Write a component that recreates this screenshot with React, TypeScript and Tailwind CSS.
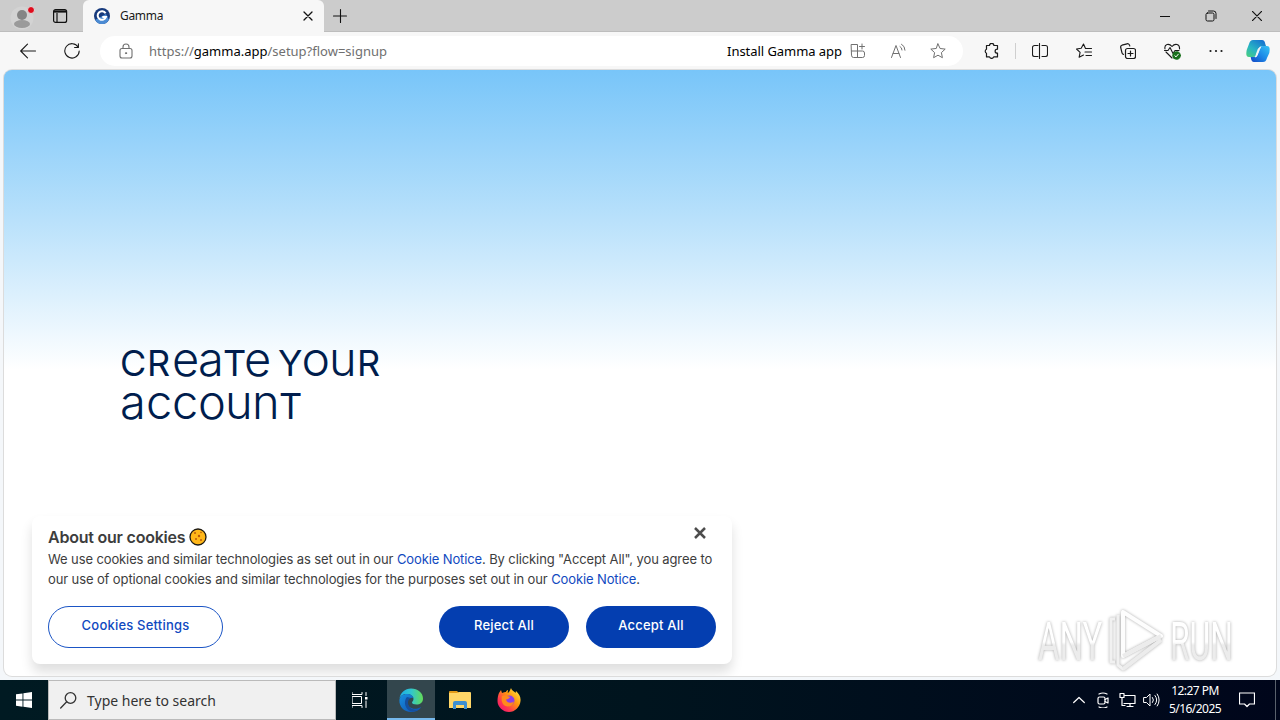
import type { ReactNode } from "react";

type IconProps = { className?: string; children: ReactNode; box?: string };

function Icon({ className = "size-4", children, box = "0 0 16 16" }: IconProps) {
  return (
    <svg
      className={`shrink-0 ${className}`}
      viewBox={box}
      fill="none"
      stroke="currentColor"
      strokeWidth={1}
      strokeLinecap="round"
      strokeLinejoin="round"
    >
      {children}
    </svg>
  );
}

const star = "M8 .9 10.1 5.5 15.2 6.1 11.4 9.6 12.4 14.7 8 12.2 3.6 14.7 4.6 9.6 .8 6.1 5.9 5.5Z";

function TabStrip() {
  return (
    <div className="flex h-8 items-end bg-[#cccccc]">
      <div className="flex h-8 w-[83px] items-center border-b border-[#bdbdbd]">
        <svg className="ml-2.5 h-7 w-7 shrink-0" viewBox="0 0 28 28">
          <circle cx="12" cy="16" r="11.5" fill="#d3d3d3" />
          <circle cx="12" cy="13" r="5" fill="#858585" />
          <ellipse cx="12" cy="22" rx="8" ry="4" fill="#9a9a9a" />
          <circle cx="21" cy="8" r="3.5" fill="#e00b1c" stroke="#dedede" />
        </svg>
        <svg className="ml-3.5 h-4 w-4 shrink-0" viewBox="0 0 16 16" fill="none" stroke="#111">
          <rect x="1.6" y="1.6" width="13" height="12.8" rx="2" strokeWidth="1.2" />
          <path d="M2 3.5h12" strokeWidth="2.2" />
          <path d="M5 5v9" strokeWidth="1.2" />
        </svg>
      </div>
      <div className="flex h-8 w-[241px] items-center rounded-t-md bg-[#f7f7f7] pl-[11px] pr-[11px]">
        <svg className="h-4 w-4 shrink-0" viewBox="0 0 16 16">
          <circle cx="8" cy="8" r="8" fill="#173a7d" />
          <path d="M1 12a8 8 0 0 0 14 0L12 6Z" fill="#4b8bd3" />
          <path d="M11.6 5.2A4.3 4.3 0 1 0 12 9H8.3" fill="none" stroke="white" strokeWidth="2" />
        </svg>
        <span className="ml-2.5 font-['Noto_Sans'] text-[12px] tracking-[-0.3px] text-[#1a1a1a]">Gamma</span>
        <Icon className="ml-auto h-2.5 w-2.5 text-[#111]" box="0 0 10 10">
          <path d="m1 1 8 8M9 1 1 9" strokeWidth="1.3" />
        </Icon>
      </div>
      <div className="flex h-8 flex-1 items-center border-b border-[#bdbdbd] pl-2 text-[#111]">
        <Icon box="0 0 16 16" className="size-4">
          <path d="M8.500 1.500v13M1.500 8h13" strokeWidth="1.1" />
        </Icon>
        <div className="ml-auto flex items-center gap-9 pr-[18px]">
          <Icon className="h-2.5 w-2.5" box="0 0 10 10"><path d="M0 5.5h10" /></Icon>
          <Icon className="h-2.5 w-2.5 overflow-visible" box="0 0 10 10">
            <rect x="0" y="2" width="8" height="8" rx="1.5" />
            <path d="M2.500 0h5A2.500 2.500 0 0 1 10 2.500v5" />
          </Icon>
          <Icon className="h-2.5 w-2.5" box="0 0 10 10"><path d="m.3.3 9.4 9.4M9.7.3.3 9.7" strokeWidth="1.2" /></Icon>
        </div>
      </div>
    </div>
  );
}

function Toolbar() {
  return (
    <div className="flex h-[38px] items-center bg-[#f7f7f7] pl-5 pr-[10px] font-['Noto_Sans'] text-[#1a1a1a]">
      <Icon><path d="M15.5 8H.7M7.5 1.2.7 8l6.8 6.8" strokeWidth="1.1" /></Icon>
      <Icon className="ml-7 size-4">
        <path d="M14.2 4.2A7.2 7.2 0 1 0 15.2 8M14.4.8v3.7h-3.8" strokeWidth="1.1" />
      </Icon>
      <div className="ml-5 flex h-[30px] w-[863px] items-center rounded-full bg-white pl-[18px] pr-[17px] text-[#707070]">
        <Icon>
          <rect x="2" y="5.5" width="12" height="9.5" rx="2" strokeWidth="1.1" />
          <path d="M5 5.5V4a3 3 0 0 1 6 0v1.5" strokeWidth="1.1" />
          <circle cx="8" cy="10.2" r=".6" fill="currentColor" />
        </Icon>
        <span className="ml-[15px] whitespace-nowrap pt-px text-[13px]">
          https://<span className="text-black">gamma.app</span>/setup?flow=signup
        </span>
        <span className="ml-auto whitespace-nowrap pt-px text-[13px] tracking-[-0.05px] text-black">Install Gamma app</span>
        <Icon className="ml-2 size-4">
          <path d="M1.5 1.5h6v13h-4a2 2 0 0 1-2-2ZM1.5 8h11a2 2 0 0 1 2 2v2.500a2 2 0 0 1-2 2h-5M12 1v5M9.500 3.500h5" />
        </Icon>
        <Icon className="ml-6 size-4">
          <path d="M1.500 14.500 6 2.500 10.500 14.500M3.100 10.500h5.800M10 3.500q2 1 2 3.500M11.500 1.200q3.500 1.800 3.500 6" />
        </Icon>
        <Icon className="ml-6 size-4"><path d={star} /></Icon>
      </div>
      <Icon className="ml-5 size-4">
        <path d="M3.500 2.500h3a2.200 2.200 0 0 1 4.400 0h3.600v3.700c-3.200 0-3.200 4 0 4v3.700h-3.800a2.200 2.200 0 0 1-4.200 0h-3v-3.600a2.200 2.200 0 0 1 0-4Z" strokeWidth="1.200" />
      </Icon>
      <div className="ml-4 h-4 w-px bg-[#cfcfcf]" />
      <Icon className="ml-4 size-4">
        <path d="M6 2.500H2.500a2 2 0 0 0-2 2v7a2 2 0 0 0 2 2H6M7.500 .5v15M10 2.500h3.500a2 2 0 0 1 2 2v7a2 2 0 0 1-2 2H10" strokeWidth="1.100" />
      </Icon>
      <Icon className="ml-7 size-4">
        <path d="M9.500 5.500 7.500 1 5.200 5.300.5 6l3.600 3.300-1 5L7.500 12M9.500 5.500h6M9 9h6.500M10 12.500h5.500" strokeWidth="1.100" />
      </Icon>
      <Icon className="ml-7 size-4">
        <rect x="5.500" y="5.500" width="10" height="10" rx="2" strokeWidth="1.200" />
        <path d="M10.500 8v5M8 10.500h5M3.500 11.300A2 2 0 0 1 2 9.800L.7 4.500A2 2 0 0 1 2 2.200L7 .8a2 2 0 0 1 2.500 1.400L9.800 3" strokeWidth="1.200" />
      </Icon>
      <Icon className="ml-7 h-[17px] w-[17px]" box="0 0 17 17">
        <path d="M1 6C0 1 5 0 8 3.500 11 0 16 1 15.500 6M2 9l6 6M.5 7.500H4l2-3 3 6 2-3h4" strokeWidth="1.100" />
        <circle cx="12.500" cy="12.500" r="3.800" fill="#18701b" stroke="#18701b" />
        <path d="m10.800 12.700 1.200 1.200 2.300-2.700" stroke="white" />
      </Icon>
      <Icon className="ml-[27px] size-4">
        <g fill="currentColor" stroke="none"><circle cx="2.500" cy="8" r="1.100" /><circle cx="8" cy="8" r="1.100" /><circle cx="13.500" cy="8" r="1.100" /></g>
      </Icon>
      <svg className="ml-auto h-6 w-6 shrink-0" viewBox="0 0 24 24">
        <defs>
          <linearGradient id="copilotA" x1="0" y1="1" x2=".8" y2="0"><stop stopColor="#4bd07a" /><stop offset=".45" stopColor="#28b5c4" /><stop offset="1" stopColor="#1672d0" /></linearGradient>
          <linearGradient id="copilotB" x1="1" y1="0" x2="0" y2="1"><stop stopColor="#36c4f4" /><stop offset=".5" stopColor="#1d8be8" /><stop offset="1" stopColor="#1346c4" /></linearGradient>
        </defs>
        <path d="M7 1h9c2 0 2.800 1.500 3.300 4L20 7h-4c-2 0-2.500 1-3 3l-2 5c-.8 2-1.500 3-4 3H3c-3 0-3-3-2.300-7L3 5c1-3 2-4 4-4Z" fill="url(#copilotA)" />
        <path d="M17 23H8c-2 0-2.800-1.500-3.300-5H8c2 0 2.500-1 3-3l2-5c.8-2 1.500-3 4-3h4c3 0 3 3 2.300 7L21 19c-1 3-2 4-4 4Z" fill="url(#copilotB)" />
        <path d="M14.800 8.500c-.8.300-1 1-1.300 1.800L11 16.500c-.3.800-.7 1.300-1.500 1.500l2.200-6.500c.6-2 1.500-3 3.100-3Z" fill="#f7f7f7" stroke="#f7f7f7" />
      </svg>
    </div>
  );
}

// Unicase headline: small letters are enlarged to sit at cap height
const cap = "inline-block text-[36px] font-[380]";
const low = "inline-block text-[47px] font-[300]";

function Headline() {
  return (
    <h1 className="flex flex-col pl-[116px] pt-[267px] font-['Inter'] text-[#001d4d]">
      <div className="flex h-[43px] items-baseline leading-[43px]">
        <span className={`${cap} w-[27px]`}>C</span>
        <span className={`${cap} w-[25px]`}>R</span>
        <span className={`${low} w-[26px]`}>e</span>
        <span className={`${low} w-[25px]`}>a</span>
        <span className={`${cap} w-[21px]`}>T</span>
        <span className={`${low} w-[34px]`}>e</span>
        <span className={`${cap} w-[24px]`}>Y</span>
        <span className={`${cap} w-[27px]`}>O</span>
        <span className={`${low} w-[28px]`}>u</span>
        <span className={`${cap} w-[24px]`}>R</span>
      </div>
      <div className="flex h-[43px] items-baseline leading-[43px]">
        <span className={`${low} w-[26px]`}>a</span>
        <span className={`${low} w-[26px]`}>c</span>
        <span className={`${low} w-[26px]`}>c</span>
        <span className={`${low} w-[27px]`}>o</span>
        <span className={`${low} w-[27px]`}>u</span>
        <span className={`${low} w-[27px]`}>n</span>
        <span className={`${cap} w-[24px]`}>T</span>
      </div>
    </h1>
  );
}

function CookieBanner() {
  return (
    <div className="absolute left-7 top-[446px] h-[148px] w-[700px] rounded-lg bg-white px-4 pt-[10px] font-['Inter'] text-[#3d3d3d] shadow-[0_8px_12px_rgba(0,0,0,0.13)]">
      <div className="flex h-[23px] items-center pb-px">
        <h2 className="whitespace-nowrap text-[16px] font-semibold tracking-[-0.22px]">About our cookies</h2>
        <svg className="ml-1 h-[18px] w-[18px]" viewBox="0 0 18 18">
          <circle cx="9" cy="9" r="8" fill="#ffb719" stroke="#1d1a13" strokeWidth="1.300" />
          <g fill="#b95a0c"><circle cx="6" cy="5" r="1" /><circle cx="10" cy="8" r="1.200" /><circle cx="7" cy="11" r="1" /><circle cx="12" cy="12" r="1" /><circle cx="12" cy="4.500" r=".8" /></g>
        </svg>
        <Icon className="mb-2 ml-auto mr-2.5 h-3 w-3 text-[#4d4d4d]" box="0 0 12 12">
          <path d="m1 1 10 10M11 1 1 11" strokeWidth="2.500" strokeLinecap="butt" />
        </Icon>
      </div>
      <p className="whitespace-nowrap text-[13px] leading-5">
        <span className="block tracking-[-0.11px]">We use cookies and similar technologies as set out in our <a className="text-[#1049c0]">Cookie Notice</a>. By clicking "Accept All", you agree to</span>
        <span className="block tracking-[-0.11px]">our use of optional cookies and similar technologies for the purposes set out in our <a className="text-[#1049c0]">Cookie Notice</a>.</span>
      </p>
      <div className="mt-[17px] flex text-[13px] font-medium tracking-[0.2px]">
        <button className="h-[42px] w-[175px] rounded-full border border-[#1b55c5] pb-0.5 text-[#1049c0]">Cookies Settings</button>
        <button className="ml-auto h-[42px] w-[130px] rounded-full bg-[#043eb0] pb-0.5 text-white">Reject All</button>
        <button className="ml-[17px] h-[42px] w-[130px] rounded-full bg-[#043eb0] pb-0.5 text-white">Accept All</button>
      </div>
    </div>
  );
}

function Watermark() {
  return (
    <div className="absolute left-[1034px] top-[537px] flex h-[66px] w-[196px] items-center font-['Roboto'] text-[53px] leading-none drop-shadow-[0_0_1.5px_#aaa]">
      <span className="w-[68px] origin-left scale-x-[0.62] pt-1 text-transparent">
        <span className="bg-[linear-gradient(#fff_50%,#ececec_55%)] bg-clip-text">ANY</span>
      </span>
      <svg className="h-[66px] w-[62px] shrink-0" viewBox="0 0 62 66" fill="none" strokeWidth="4" strokeLinejoin="round">
        <path d="M9 12H5v43h4M12 8v50l5 4 38-29" stroke="#f1f1f1" strokeWidth="3" />
        <path d="M17 5v44l38-20Z" stroke="#fdfdfd" />
        <path d="M17 49l38-20M17 62l38-29" stroke="#ececec" />
      </svg>
      <span className="ml-0.5 w-[66px] origin-left scale-x-[0.6] pt-1 text-transparent">
        <span className="bg-[linear-gradient(#fff_50%,#ececec_55%)] bg-clip-text">RUN</span>
      </span>
    </div>
  );
}

function Taskbar() {
  return (
    <div className="flex h-10 items-center bg-linear-to-r from-[#001a22] via-[#00141e] to-[#00061b] font-['Noto_Sans'] text-white">
      <div className="flex w-12 justify-center">
        <svg className="h-4 w-4" viewBox="0 0 16 16" fill="white">
          <path d="M0 2.300 6.500 1.400v6.200H0ZM7.400 1.200 16 0v7.600H7.400ZM0 8.500h6.500v6.200L0 13.800ZM7.400 8.500H16V16l-8.600-1.200Z" />
        </svg>
      </div>
      <div className="flex h-10 w-72 items-center border border-[#bababa] bg-[#f0f0f0] pl-[11px] text-[#333]">
        <Icon className="h-[17px] w-[17px]" box="0 0 17 17">
          <circle cx="10.500" cy="6" r="5.300" strokeWidth="1.300" />
          <path d="m6.700 9.800-6 6.200" strokeWidth="1.300" />
        </Icon>
        <span className="ml-2.5 text-[14px]">Type here to search</span>
      </div>
      <div className="flex w-[51px] justify-center pr-[3px]">
        <Icon className="h-4 w-4">
          <path d="M0 .5v2h10v-2M0 15.500v-2h10v2M.5 4.500h9v7h-9ZM14 .5v3M14 9v6.500" />
          <rect x="13" y="5" width="2.500" height="2.500" fill="white" stroke="none" />
        </Icon>
      </div>
      <div className="flex h-10 w-12 items-center justify-center border-b-2 border-[#76b9ed] bg-[#33464d]">
        <svg className="mt-px h-6 w-6" viewBox="0 0 24 24">
          <defs>
            <linearGradient id="edgeTop" x1="0" x2="1"><stop stopColor="#1bace9" /><stop offset=".5" stopColor="#31c6ce" /><stop offset="1" stopColor="#64dc57" /></linearGradient>
            <linearGradient id="edgeLow" x1="0" x2="1" y2="1"><stop stopColor="#178fe0" /><stop offset="1" stopColor="#104eae" /></linearGradient>
          </defs>
          <path d="M.5 11C1 5 6 .5 12 .5c7 0 12 4.500 12 10 0 4-3 6-6.500 6-3 0-4.500-1-4.500-2s1.500-1.500 1.500-3.500c0-3-3-5-6.500-5-4 0-7 2-7.500 5Z" fill="url(#edgeTop)" />
          <path d="M.4 12C1 8 4 6 8 6c3 0 6 1.500 6.500 4-3-1-6 1-6 4.500 0 5 5 7 10 6 2-.4 3-1.500 3.500-1-2 3-6 4.500-10 4.500C5 24 0 18.500.4 12Z" fill="url(#edgeLow)" />
          <path d="M8 9C5 12 5 19 10 22.500c2 1.500 6 1 9-.5-5 .5-10-2.500-10-7.500 0-2 1-3.500 3-4.500" fill="#154f9e" />
        </svg>
      </div>
      <svg className="ml-3.5 h-[22px] w-[22px]" viewBox="0 0 22 22">
        <path d="M0 3q0-1 1-1h7l2 2H0Z" fill="#e39b18" />
        <path d="M0 4h8l2-1h11q1 0 1 1v15H0Z" fill="#ffd667" />
        <path d="M4 20v-6q0-2 2-2h10q2 0 2 2v6h-3v-4H7v4Z" fill="#3d8fd0" />
      </svg>
      <svg className="ml-[26px] h-6 w-6" viewBox="0 0 24 24">
        <defs>
          <linearGradient id="fox" x1="1" y1="0" x2="0" y2="1"><stop stopColor="#fff44f" /><stop offset=".4" stopColor="#ff980e" /><stop offset=".7" stopColor="#ff3750" /><stop offset="1" stopColor="#eb0878" /></linearGradient>
        </defs>
        <path d="M2 5 4 2l1 3c2-1 3-1 4-1 0-1 1-2 2-2l-.3 3c2-1 2.300-3 3.300-5 1 3 3 3 4.500 5L19 3c3 3 5 6 4.500 10C23 19 18 24 12 24S.5 19 .5 13c0-3 .5-6 1.500-8Z" fill="url(#fox)" />
        <circle cx="12.500" cy="12.500" r="5" fill="#8d3ee8" />
        <path d="M5 8c3-2 5 0 7 .5 2 .5 0 2.500-3 3 1 4 5 4 8 2-1 4-5 6-8.500 4.500C5 16.500 4 12 5 8Z" fill="#ff8a1c" />
      </svg>
      <div className="ml-auto flex items-center">
        <Icon className="h-3 w-3" box="0 0 12 12"><path d="m.7 8.500 5.300-5 5.300 5" strokeWidth="1.200" /></Icon>
        <Icon className="ml-2.5 size-4">
          <rect x="3" y="5" width="7" height="7" rx="1.500" strokeWidth="1.200" />
          <path d="m10 7.500 3-1.500v5L10 9.500M4 2q4-2 8 0M4 15q4 2 8 0" strokeWidth="1.200" />
        </Icon>
        <Icon className="ml-2 h-4 w-[17px]" box="0 0 17 16">
          <path d="M6 3.500h10v8H5M8 14.500h6M11 11.500v3M1 1.500h4v4H1ZM3 5.500v8h3" strokeWidth="1.200" />
        </Icon>
        <Icon className="ml-[7px] h-4 w-[17px]" box="0 0 17 16">
          <path d="M1 5.500h2.500L7 2v12l-3.500-3.500H1ZM9.500 5.500q2 2.500 0 5M12 3.500q3.500 4.500 0 9M14.200 2q4 6 0 12" />
        </Icon>
        <div className="ml-[7px] w-[56px] whitespace-nowrap text-center text-[12px] leading-[18px] tracking-[-0.55px]">
          <div>12:27 PM</div>
          <div>5/16/2025</div>
        </div>
        <Icon className="ml-4 size-4">
          <path d="M.5 1h15v11h-5L8 14.500 5.500 12h-5Z" strokeWidth="1.200" />
        </Icon>
        <div className="ml-5 h-10 w-[5px] border-l border-[#59616c]" />
      </div>
    </div>
  );
}

export default function App() {
  return (
    <div className="flex h-[720px] w-[1280px] flex-col overflow-hidden bg-[#f7f7f7]">
      <TabStrip />
      <Toolbar />
      <div className="h-[610px] bg-[#f4f7fa] px-1 pb-1">
        <main className="relative h-[606px] overflow-hidden rounded-lg bg-white bg-[linear-gradient(180deg,#78c5f9_0,#b9e1fb_150px,#ffffff_300px)] shadow-[0_0_0_1px_#dcdcdc]">
          <Headline />
          <CookieBanner />
          <Watermark />
        </main>
      </div>
      <Taskbar />
    </div>
  );
}
